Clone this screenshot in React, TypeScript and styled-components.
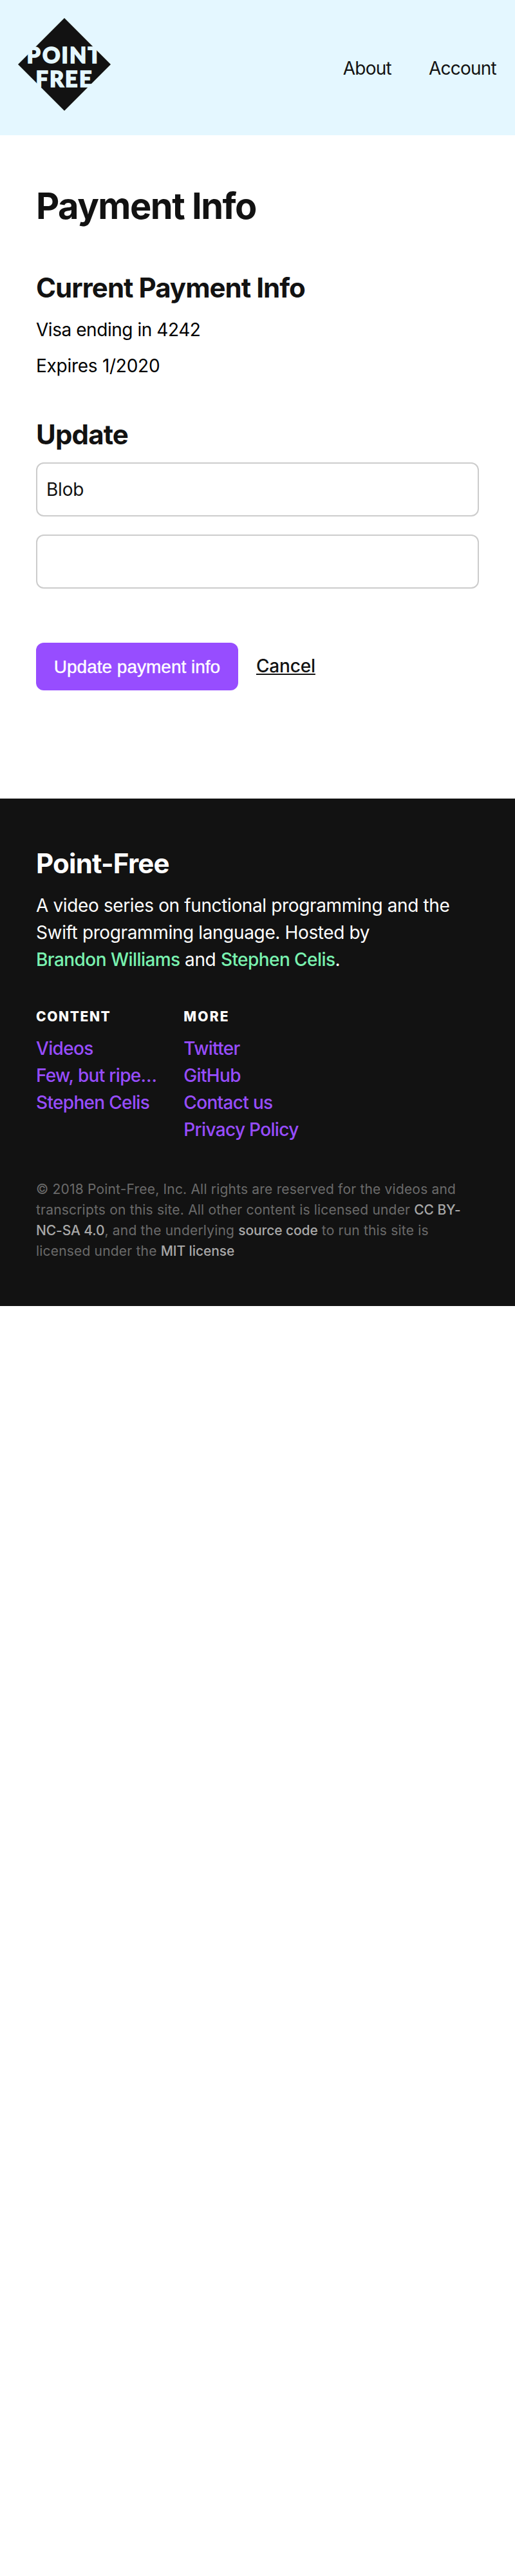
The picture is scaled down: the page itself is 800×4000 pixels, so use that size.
import React from 'react';
import styled, { createGlobalStyle } from 'styled-components';

const GlobalStyle = createGlobalStyle`
  * { box-sizing: border-box; }
  body {
    margin: 0;
    background: #fff;
    color: #000;
    font-family: Inter, "Liberation Sans", sans-serif;
    font-size: 28px;
    line-height: 42px;
  }
  h1, h2, h3, p, ul { margin: 0; padding: 0; }
`;

const Header = styled.header`
  display: flex;
  align-items: center;
  justify-content: space-between;
  height: 210px;
  padding: 0 29px 10px 28px;
  background: #e4f7ff;
`;

const Logo = styled.svg`
  display: block;
  width: 144px;
  height: 144px;
  overflow: visible;
`;

const LogoText = styled.text`
  font-family: Lato, sans-serif;
  font-weight: 900;
  font-size: 34px;
  fill: #e4f7ff;
  stroke: #e4f7ff;
  stroke-width: 1.6px;
`;

const Nav = styled.nav`
  display: flex;
  gap: 58px;
  margin-top: 12px;
`;

const NavLink = styled.a`
  color: #121212;
  letter-spacing: -0.75px;
`;

const Main = styled.main`
  padding: 76px 56px 168px;
`;

const Title = styled.h1`
  color: #121212;
  font-size: 56px;
  font-weight: 700;
  line-height: 68px;
  letter-spacing: -1.5px;
`;

const Heading = styled.h2<{ $top?: number; $spacing?: number }>`
  margin-top: ${({ $top = 0 }) => $top}px;
  color: inherit;
  font-size: 42px;
  font-weight: 700;
  line-height: 51px;
  letter-spacing: ${({ $spacing = -0.85 }) => $spacing}px;
`;

const Section = styled.section`
  color: #121212;
`;

const Detail = styled.p<{ $top: number; $spacing: number }>`
  margin-top: ${({ $top }) => $top}px;
  color: #000;
  letter-spacing: ${({ $spacing }) => $spacing}px;
`;

const Field = styled.input<{ $top: number }>`
  display: block;
  width: 100%;
  height: 84px;
  margin-top: ${({ $top }) => $top}px;
  padding: 0 14px;
  border: 2px solid #ccc;
  border-radius: 12px;
  background: #fff;
  color: #121212;
  font: 400 28px Inter, sans-serif;
  letter-spacing: -0.2px;
  outline: none;
`;

const Actions = styled.div`
  display: flex;
  align-items: center;
  gap: 28px;
  margin-top: 84px;
`;

const SubmitButton = styled.button`
  width: 314px;
  height: 74px;
  padding: 2px 0 0;
  border: 0;
  border-radius: 12px;
  background: #974dff;
  color: #fff;
  font: 400 28px "Liberation Sans", Arial, sans-serif;
  -webkit-text-stroke: 0.4px #fff;
  white-space: nowrap;
`;

const CancelLink = styled.a`
  margin-bottom: 2px;
  color: #121212;
  font-weight: 500;
  letter-spacing: -0.18px;
  text-decoration: underline;
  text-decoration-thickness: 2px;
  text-underline-offset: 2px;
  text-decoration-skip-ink: none;
`;

const Footer = styled.footer`
  height: 788px;
  padding: 75px 56px 0;
  background: #121212;
  color: #fff;
`;

const Tagline = styled.p`
  margin-top: 19px;
  letter-spacing: -0.37px;
`;

const HostLink = styled.a`
  color: #79f2b0;
  font-weight: 500;
  letter-spacing: -0.56px;
  white-space: nowrap;
`;

const Columns = styled.div`
  display: grid;
  grid-template-columns: 1fr 2fr;
  margin-top: 55px;
`;

const ColumnTitle = styled.h3<{ $spacing: number }>`
  font-size: 21px;
  font-weight: 800;
  line-height: 25px;
  letter-spacing: ${({ $spacing }) => $spacing}px;
`;

const LinkList = styled.ul`
  margin-top: 16px;
  list-style: none;
`;

const FooterLink = styled.a`
  color: #974dff;
  font-weight: 500;
  letter-spacing: -0.68px;
`;

const Legal = styled.p`
  margin-top: 56px;
  color: #6a6a6a;
  font-size: 21px;
  line-height: 32px;
  letter-spacing: 0.19px;
`;

const LegalLink = styled.a`
  color: #a8a8a8;
  font-weight: 500;
  letter-spacing: -0.1px;
`;

const columns = [
  { title: 'CONTENT', spacing: 1.6, links: ['Videos', 'Few, but ripe…', 'Stephen Celis'] },
  { title: 'MORE', spacing: 2.2, links: ['Twitter', 'GitHub', 'Contact us', 'Privacy Policy'] },
];

export default function App() {
  return (
    <>
      <GlobalStyle />
      <Header>
        <Logo viewBox="0 0 144 144" role="img" aria-label="Point-Free">
          <path d="M72 0 144 72 72 144 0 72Z" fill="#121212" />
          <LogoText x="13.5 38 67.5 80 108.5" y="70">POINT</LogoText>
          <LogoText x="27.5 49 73 95" y="107">FREE</LogoText>
        </Logo>
        <Nav>
          <NavLink>About</NavLink>
          <NavLink>Account</NavLink>
        </Nav>
      </Header>

      <Main>
        <Title>Payment Info</Title>
        <Section>
          <Heading $top={67} $spacing={-0.97}>Current Payment Info</Heading>
          <Detail $top={19} $spacing={-0.45}>Visa ending in 4242</Detail>
          <Detail $top={14} $spacing={-0.27}>Expires 1/2020</Detail>
        </Section>
        <Section>
          <Heading $top={60}>Update</Heading>
          <Field $top={18} defaultValue="Blob" />
          <Field $top={28} />
          <Actions>
            <SubmitButton>Update payment info</SubmitButton>
            <CancelLink>Cancel</CancelLink>
          </Actions>
        </Section>
      </Main>

      <Footer>
        <Heading $spacing={-0.77}>Point-Free</Heading>
        <Tagline>
          A video series on functional programming and the Swift programming language. Hosted by{' '}
          <HostLink>Brandon Williams</HostLink> and <HostLink>Stephen Celis</HostLink>.
        </Tagline>
        <Columns>
          {columns.map(({ title, spacing, links }) => (
            <div key={title}>
              <ColumnTitle $spacing={spacing}>{title}</ColumnTitle>
              <LinkList>
                {links.map((label) => (
                  <li key={label}>
                    <FooterLink>{label}</FooterLink>
                  </li>
                ))}
              </LinkList>
            </div>
          ))}
        </Columns>
        <Legal>
          © 2018 Point-Free, Inc. All rights are reserved for the videos and transcripts on this
          site. All other content is licensed under <LegalLink>CC BY-NC-SA 4.0</LegalLink>, and the
          underlying <LegalLink>source code</LegalLink> to run this site is licensed under the{' '}
          <LegalLink>MIT license</LegalLink>
        </Legal>
      </Footer>
    </>
  );
}
